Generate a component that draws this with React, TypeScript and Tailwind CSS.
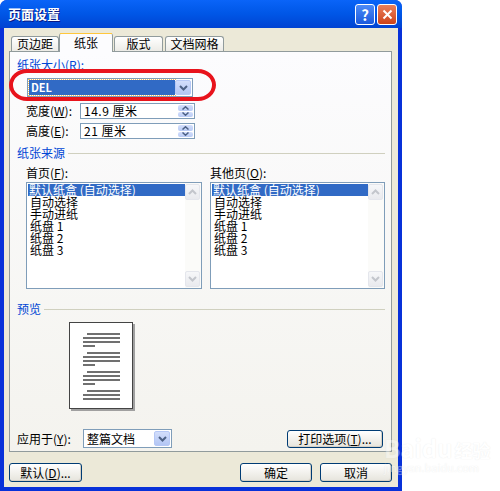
import React from 'react';

const items = ['默认纸盒 (自动选择)', '自动选择', '手动进纸', '纸盘 1', '纸盘 2', '纸盘 3'];

const Chevron = ({ up = false, color = '#4D6185' }: { up?: boolean; color?: string }) => (
  <svg width="9" height="6" viewBox="0 0 9 6">
    <path d={up ? 'M1 5 L4.5 1.5 L8 5' : 'M1 1 L4.5 4.5 L8 1'} fill="none" stroke={color} strokeWidth="2" />
  </svg>
);

const DropButton = () => (
  <div className="flex w-[16px] items-center justify-center rounded-[2px] border border-[#B6C8F6] bg-linear-to-b from-[#D3DEFB] to-[#B3C6F4]">
    <Chevron />
  </div>
);

const Spin = () => (
  <div className="flex w-[15px] flex-col gap-px">
    <div className="flex flex-1 items-center justify-center rounded-[2px] bg-linear-to-b from-[#D3DEFB] to-[#B9CBF5]">
      <svg width="7" height="4" viewBox="0 0 7 4"><path d="M0.5 3.5 L3.5 0.8 L6.5 3.5" fill="none" stroke="#4D6185" strokeWidth="1.5" /></svg>
    </div>
    <div className="flex flex-1 items-center justify-center rounded-[2px] bg-linear-to-b from-[#D3DEFB] to-[#B9CBF5]">
      <svg width="7" height="4" viewBox="0 0 7 4"><path d="M0.5 0.5 L3.5 3.2 L6.5 0.5" fill="none" stroke="#4D6185" strokeWidth="1.5" /></svg>
    </div>
  </div>
);

const Button = ({ children, className = '' }: { children: React.ReactNode; className?: string }) => (
  <div className={`flex items-center justify-center rounded-[3px] border border-[#003C74] bg-linear-to-b from-white to-[#E6E4DC] text-[12px] leading-none shadow-[inset_-1px_-1px_0_#D6D0C5] ${className}`}>
    {children}
  </div>
);

const ScrollBtn = ({ up }: { up?: boolean }) => (
  <div className="flex h-[16px] items-center justify-center rounded-[2px] border border-[#E4E6EC] bg-linear-to-b from-[#F6F7F9] to-[#E9EAEE]">
    <Chevron up={up} color="#C3C6CC" />
  </div>
);

const ListBox = ({ className = '' }: { className?: string }) => (
  <div className={`flex h-[107px] border border-[#7F9DB9] bg-white ${className}`}>
    <div className="flex-1 pl-px pt-px">
      {items.map((t, i) => (
        <div
          key={t}
          className={i === 0 ? 'h-[12px] bg-[#316AC5] pl-px leading-[12px] text-white' : 'h-[12px] pl-[2px] leading-[12px]'}
        >
          {t}
        </div>
      ))}
    </div>
    <div className="flex w-[16px] flex-col justify-between bg-[#FBFBF9] py-px pr-px">
      <ScrollBtn up />
      <ScrollBtn />
    </div>
  </div>
);

const Header = ({ label }: { label: string }) => (
  <div className="flex h-[14px] items-center text-[#0046D5]">
    <span>{label}</span>
    <div className="ml-[3px] h-px flex-1 bg-[#D0D0BF]" />
  </div>
);

const Group = ({ last = false }: { last?: boolean }) => (
  <div className="flex flex-col gap-[2px]">
    <div className="ml-[17px] h-[2px] w-[33px] bg-[#707070]" />
    <div className="ml-[13px] h-[2px] w-[37px] bg-[#707070]" />
    <div className="ml-[13px] h-[2px] w-[37px] bg-[#707070]" />
    {!last && <div className="ml-[13px] h-[2px] w-[12px] bg-[#707070]" />}
  </div>
);

export default function App() {
  return (
    <div className="relative h-[491px] w-[500px] bg-white font-['Noto_Sans_CJK_SC',sans-serif] text-[12px] text-black">
      <div className="flex h-[491px] w-[402px] flex-col overflow-hidden rounded-t-[7px] bg-[#0831D9]">
        {/* title bar */}
        <div className="flex h-[28px] items-center bg-linear-to-b from-[#0A64F8] via-[#0056E6] to-[#0143D2] pl-[8px] pr-[5px]">
          <span className="text-[13px] font-bold text-white [text-shadow:1px_1px_0_#0A1883]">页面设置</span>
          <div className="flex-1" />
          <div className="flex h-[21px] w-[20px] items-center justify-center rounded-[3px] border border-white bg-linear-to-b from-[#4C8AF7] to-[#1B59DD] text-[15px] font-bold leading-none text-white">
            ?
          </div>
          <div className="ml-[2px] flex h-[21px] w-[20px] items-center justify-center rounded-[3px] border border-white bg-linear-to-b from-[#EB7F5A] to-[#CC4217]">
            <svg width="11" height="11" viewBox="0 0 11 11">
              <path d="M1.5 1.5 L9.5 9.5 M9.5 1.5 L1.5 9.5" stroke="white" strokeWidth="2" />
            </svg>
          </div>
        </div>

        {/* body */}
        <div className="mx-[4px] mb-[4px] flex flex-1 flex-col bg-[#ECE9D8] pl-[5px] pr-[6px]">
          {/* tabs */}
          <div className="relative z-10 mt-[5px] flex h-[18px] items-end pl-[2px]">
            <div className="flex h-[15px] w-[48px] items-center justify-center rounded-t-[3px] border border-b-0 border-[#919B9C] bg-linear-to-b from-white to-[#ECEBE6]">页边距</div>
            <div className="-mb-px flex h-[19px] w-[54px] flex-col rounded-t-[3px] border-x border-[#919B9C] bg-[#FCFCFE]">
              <div className="h-[1px] rounded-t-[3px] bg-[#E68B2C]" />
              <div className="h-[2px] bg-[#FFC73C]" />
              <div className="flex flex-1 items-center justify-center">纸张</div>
            </div>
            <div className="ml-px flex h-[15px] w-[49px] items-center justify-center rounded-t-[3px] border border-b-0 border-[#919B9C] bg-linear-to-b from-white to-[#ECEBE6]">版式</div>
            <div className="ml-[2px] flex h-[15px] w-[59px] items-center justify-center rounded-t-[3px] border border-b-0 border-[#919B9C] bg-linear-to-b from-white to-[#ECEBE6]">文档网格</div>
          </div>

          {/* panel */}
          <div className="relative flex h-[401px] flex-col border border-[#919B9C] bg-linear-to-b from-[#FCFCFE] to-[#F4F3EE] pl-[7px] pr-[6px]">
            <div className="mt-[6px] h-[14px] leading-[14px] text-[#0046D5]">
              纸张大小(<span className="underline">R</span>):
            </div>
            <div className="ml-[10px] mt-[6px] flex h-[19px] w-[166px] border border-[#7F9DB9] bg-white p-px">
              <div className="flex flex-1 items-center bg-[#316AC5] pl-[2px] text-[11px] font-bold text-white outline-1 outline-dotted outline-[#F0C060]">
                DEL
              </div>
              <DropButton />
            </div>
            <div className="ml-[9px] mt-[6px] flex h-[16px] items-center">
              <span className="w-[54px]">宽度(<span className="underline">W</span>):</span>
              <div className="flex h-[16px] w-[115px] border border-[#7F9DB9] bg-white p-px">
                <span className="flex-1 pl-[2px] leading-[12px] tracking-[0.5px]">14.9 厘米</span>
                <Spin />
              </div>
            </div>
            <div className="ml-[9px] mt-[4px] flex h-[16px] items-center">
              <span className="w-[54px]">高度(<span className="underline">E</span>):</span>
              <div className="flex h-[16px] w-[115px] border border-[#7F9DB9] bg-white p-px">
                <span className="flex-1 pl-[2px] leading-[12px] tracking-[0.5px]">21 厘米</span>
                <Spin />
              </div>
            </div>

            <div className="mt-[7px]">
              <Header label="纸张来源" />
            </div>
            <div className="ml-[9px] mt-[4px] flex">
              <span className="w-[184px]">首页(<span className="underline">F</span>):</span>
              <span>其他页(<span className="underline">O</span>):</span>
            </div>
            <div className="ml-[9px] flex">
              <ListBox className="w-[176px]" />
              <ListBox className="ml-[8px] w-[175px]" />
            </div>

            <div className="mt-[13px]">
              <Header label="预览" />
            </div>
            <div className="ml-[52px] mt-[6px] flex h-[87px] w-[64px] flex-col gap-[5px] border border-[#444] bg-white pt-[10px] shadow-[2px_2px_0_#A0A0A0]">
              <Group />
              <Group />
              <Group />
              <Group last />
            </div>

            <div className="mt-[20px] flex h-[19px] items-center">
              <span className="w-[66px]">应用于(<span className="underline">Y</span>):</span>
              <div className="flex h-[19px] w-[89px] border border-[#7F9DB9] bg-white p-px">
                <span className="flex-1 pl-[2px] leading-[15px]">整篇文档</span>
                <DropButton />
              </div>
              <div className="flex-1" />
              <Button className="mr-[2px] h-[18px] w-[96px]">
                打印选项(<span className="underline">T</span>)...
              </Button>
            </div>

            {/* red annotation */}
            <div className="absolute left-[-1px] top-[17px] h-[32px] w-[207px] rounded-[18px/16px] border-[4px] border-[#E8131C]" />
          </div>

          {/* bottom buttons */}
          <div className="mt-[11px] flex h-[19px]">
            <Button className="w-[73px]">
              默认(<span className="underline">D</span>)...
            </Button>
            <div className="flex-1" />
            <Button className="w-[72px]">确定</Button>
            <Button className="ml-[8px] w-[72px]">取消</Button>
          </div>
        </div>
      </div>

      {/* watermark */}
      <div className="pointer-events-none absolute left-[384px] top-[436px] flex flex-col items-start text-white opacity-40 [text-shadow:0_0_1px_#C8C8C8]">
        <span className="text-[24px] font-bold leading-none">Baidu<span className="ml-[2px] text-[18px]">经验</span></span>
        <span className="mt-[2px] text-[11px] leading-none">jingyan.baidu.com</span>
      </div>
    </div>
  );
}
